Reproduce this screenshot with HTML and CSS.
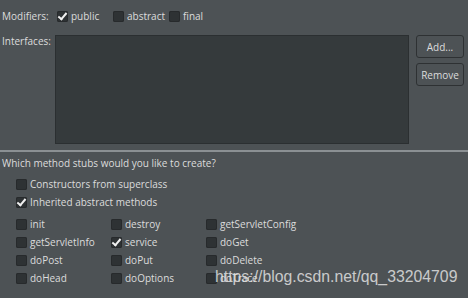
FILE: index.html
```html
<!DOCTYPE html>
<html lang="en">
<head>
    <meta charset="UTF-8">
    <title>New Servlet</title>
    <link rel="stylesheet" href="styles.css">
</head>
<body>
    <div class="top">
        <div class="row modifiers">
            <span class="label">Modifiers:</span>
            <label class="check"><span class="box on"></span>public</label>
            <label class="check"><span class="box"></span>abstract</label>
            <label class="check"><span class="box"></span>final</label>
        </div>
        <div class="row interfaces">
            <span class="label">Interfaces:</span>
            <div class="list"></div>
            <div class="buttons">
                <button>Add...</button>
                <button>Remove</button>
            </div>
        </div>
    </div>

    <hr class="sep">

    <p class="question">Which method stubs would you like to create?</p>
    <div class="stubs">
        <label class="check"><span class="box"></span>Constructors from superclass</label>
        <label class="check"><span class="box on"></span>Inherited abstract methods</label>
    </div>
    <div class="grid">
        <label class="check"><span class="box"></span>init</label>
        <label class="check"><span class="box"></span>destroy</label>
        <label class="check"><span class="box"></span>getServletConfig</label>
        <label class="check"><span class="box"></span>getServletInfo</label>
        <label class="check"><span class="box on"></span>service</label>
        <label class="check"><span class="box"></span>doGet</label>
        <label class="check"><span class="box"></span>doPost</label>
        <label class="check"><span class="box"></span>doPut</label>
        <label class="check"><span class="box"></span>doDelete</label>
        <label class="check"><span class="box"></span>doHead</label>
        <label class="check"><span class="box"></span>doOptions</label>
        <label class="check"><span class="box"></span>doTrace</label>
    </div>

    <div class="watermark">https://blog.csdn.net/qq_33204709</div>
</body>
</html>
```

FILE: styles.css
```css
body {
    margin: 0;
    width: 468px;
    height: 298px;
    overflow: hidden;
    position: relative;
    background-color: #4d5255;
    color: #dcdcdc;
    font-family: "Open Sans", "DejaVu Sans", sans-serif;
    font-size: 10px;
}

.top {
    padding: 9px 4px 0 2px;
}

.row {
    display: flex;
}

.modifiers {
    align-items: center;
    height: 14px;
}

.modifiers .label {
    width: 55px;
}

.check {
    display: flex;
    align-items: center;
    gap: 3px;
    height: 14px;
}

.modifiers .check {
    width: 56px;
}

.box {
    width: 11px;
    height: 11px;
    border-radius: 2px;
    background-color: #2e3234;
    box-shadow: inset 0 0 0 1px #272a2c;
    position: relative;
    flex-shrink: 0;
}

.box.on::after {
    content: "";
    position: absolute;
    left: 3px;
    top: 0px;
    width: 3px;
    height: 7px;
    border: solid #f0f0f0;
    border-width: 0 2px 2px 0;
    transform: rotate(40deg);
}

.interfaces {
    margin-top: 12px;
}

.interfaces .label {
    width: 53px;
    margin-top: -1px;
}

.list {
    width: 352px;
    height: 107px;
    background-color: #353a3c;
    border: 1px solid #2b2f31;
}

.buttons {
    display: flex;
    flex-direction: column;
    gap: 5px;
    margin-left: 7px;
}

.buttons button {
    width: 48px;
    height: 23px;
    padding: 0;
    background-color: #4d5255;
    border: 1px solid #2e3133;
    border-radius: 3px;
    color: #dcdcdc;
    font-family: inherit;
    font-size: 10px;
}

.sep {
    margin: 6px 0 0;
    border: none;
    height: 2px;
    background-color: #8b9093;
}

.question {
    margin: 4px 0 0 2px;
}

.stubs {
    display: flex;
    flex-direction: column;
    gap: 4px;
    padding: 7px 0 0 16px;
}

.grid {
    display: grid;
    grid-template-columns: 95px 95px 1fr;
    row-gap: 4px;
    padding: 8px 0 0 16px;
}

.watermark {
    position: absolute;
    left: 215px;
    top: 268px;
    font-family: "Liberation Sans", Arial, sans-serif;
    font-size: 15.8px;
    color: rgba(225, 225, 225, 0.85);
}
```
